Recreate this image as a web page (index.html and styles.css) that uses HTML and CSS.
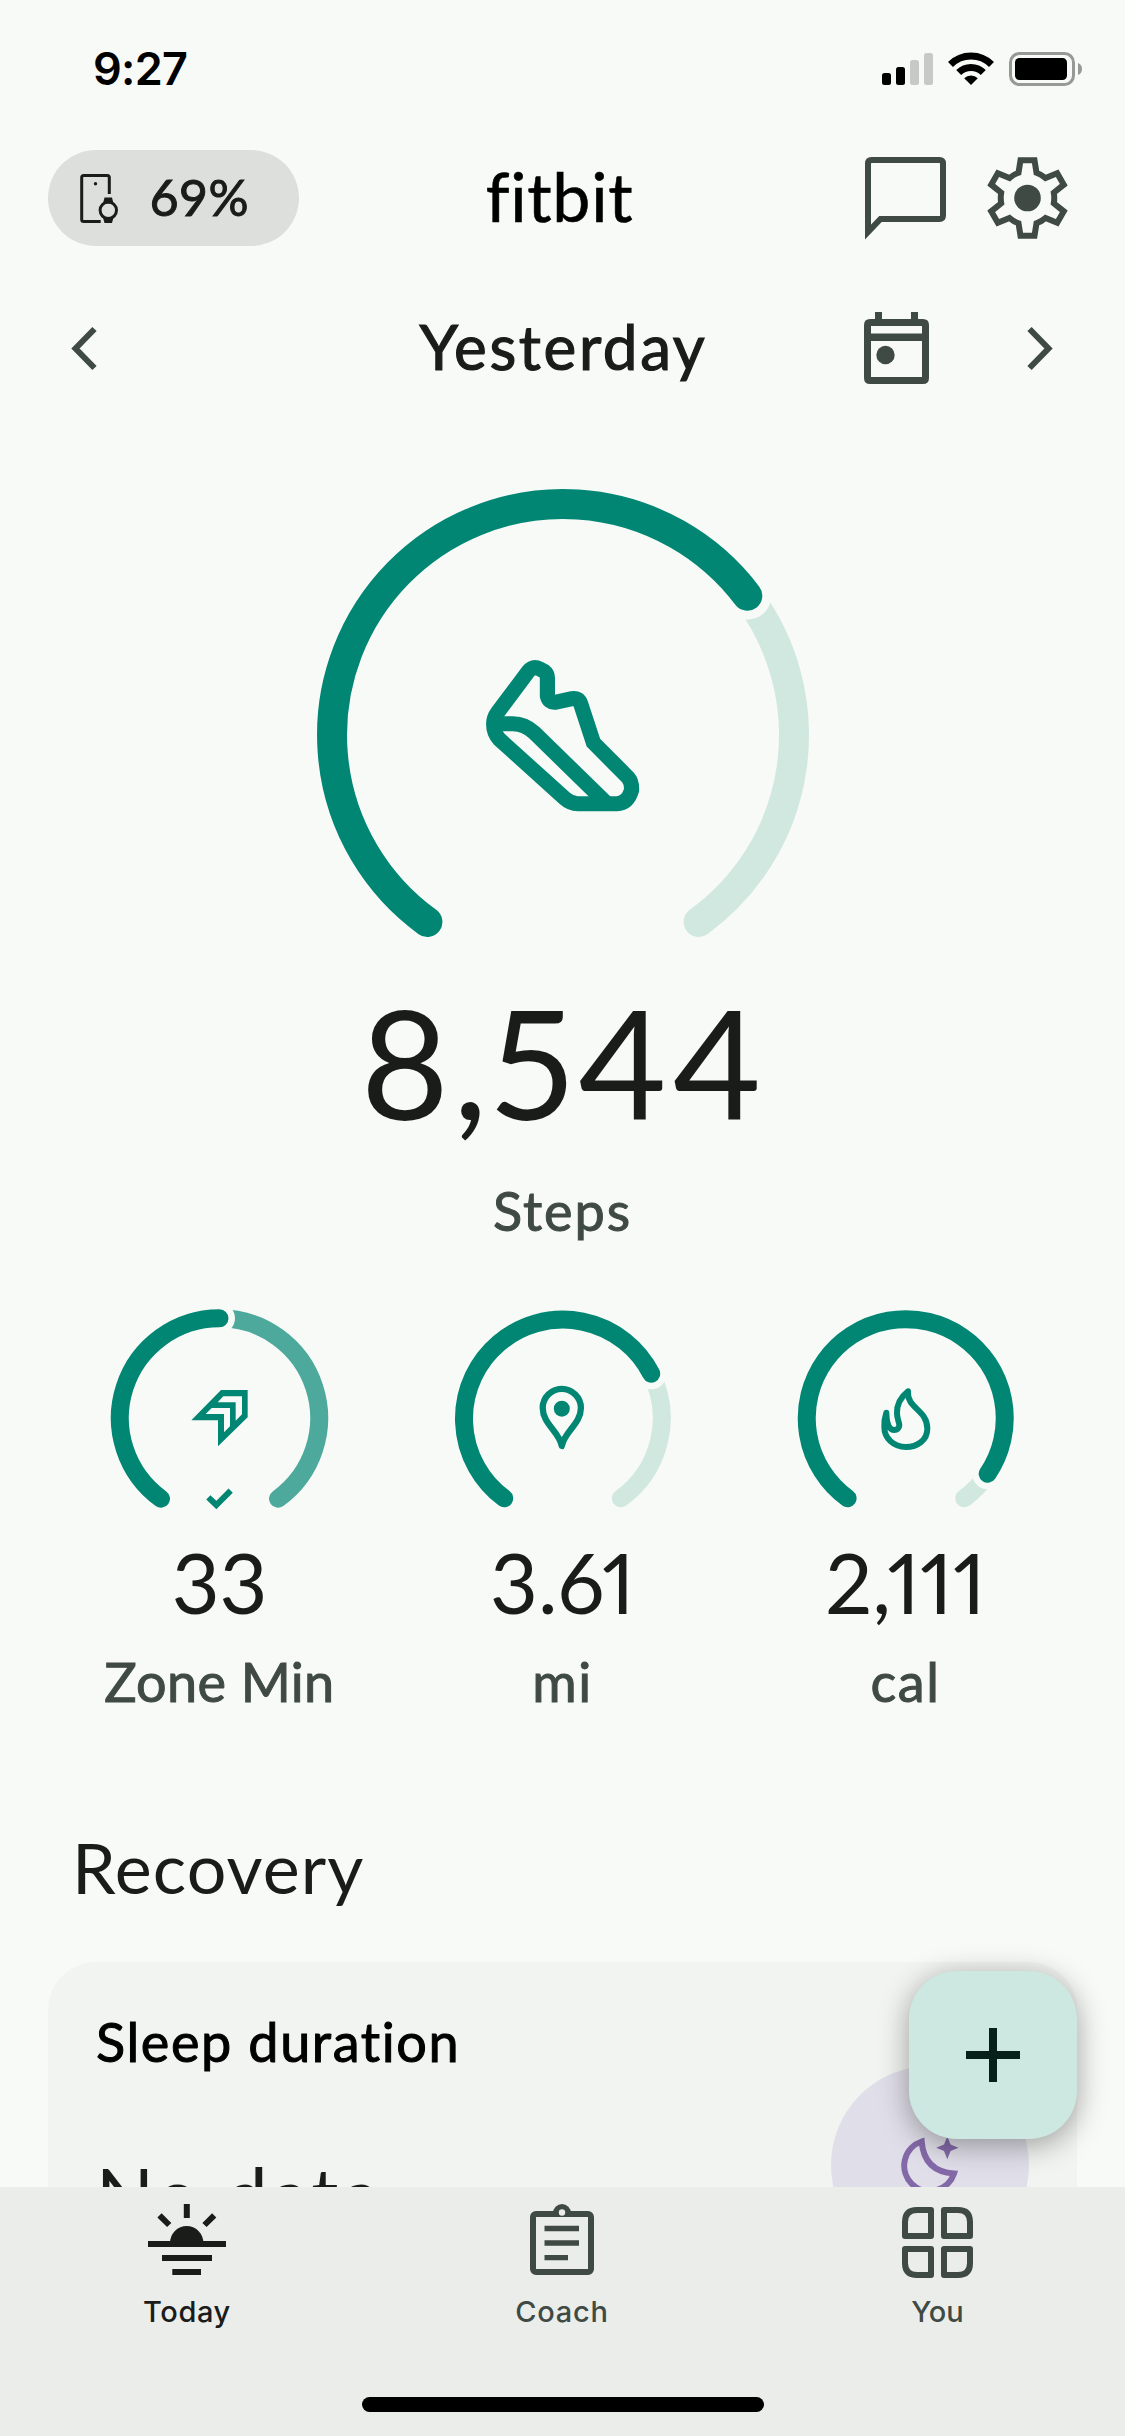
FILE: index.html
```html
<!DOCTYPE html>
<html lang="en">
<head>
<meta charset="utf-8">
<title>Fitbit – Today</title>
<link rel="stylesheet" href="styles.css">
</head>
<body>
<div class="screen">
  <header class="status">
    <span class="time">9:27</span>
    <svg class="status-icons" viewBox="882 50 202 38" width="202" height="38">
      <rect x="882" y="73" width="9" height="12" rx="2.5"/>
      <rect x="896" y="67" width="9" height="18" rx="2.5"/>
      <g fill="#c7c9c6"><rect x="910" y="60" width="9" height="25" rx="2.5"/><rect x="924" y="53" width="9" height="32" rx="2.5"/></g>
      <g fill="none" stroke="#000" stroke-width="7"><path d="M950.5 64.5a29 29 0 0 1 41 0"/><path d="M958.700 72.500a17.400 17.400 0 0 1 24.600 0"/></g>
      <path d="M971 85l-6.800-6.800a9.600 9.600 0 0 1 13.600 0z"/>
      <rect x="1010.500" y="53.500" width="63" height="31" rx="9" fill="none" stroke="#979996" stroke-width="3"/>
      <rect x="1015" y="58" width="52" height="22" rx="4.500"/>
      <path d="M1078 63q4 1.500 4 6t-4 6z" fill="#979996"/>
    </svg>
  </header>

  <div class="topbar">
    <div class="device">
      <svg viewBox="79 173 40 51" width="40" height="51" fill="none" stroke="#1a1c1a" stroke-width="3">
        <path d="M109.300 194v-16.500q0-2-2-2h-23.600q-2 0-2 2v42q0 2 2 2h17"/>
        <circle cx="95.500" cy="183.700" r="1.700" fill="#1a1c1a" stroke="none"/>
        <circle cx="108.300" cy="210.300" r="8.200"/>
        <path d="M104.500 197.500h7.500l1.500 6h-10.500zM104.500 223h7.500l1.500-5.500h-10.500z" fill="#1a1c1a" stroke="none"/>
      </svg>
      <span class="battery">69%</span>
    </div>
    <span class="logo">fitbit</span>
    <div class="actions">
      <svg viewBox="865 157 81 83" width="81" height="83" fill="none" stroke="#404a45" stroke-width="6">
        <path d="M868 232v-68.500q0-3.500 3.500-3.500h68q3.500 0 3.500 3.500v52q0 3.500-3.500 3.500h-59z" stroke-miterlimit="8"/>
      </svg>
      <svg viewBox="-40.500 -41 81 82" width="81" height="82" fill="none" stroke="#404a45" stroke-width="6">
        <path d="M-7-37.700H7L9-25.300Q14-23.500 18-20L29.700-24.700 36.300-13.300 26.300-5.300Q27.200 0 26.300 5.300L36.300 13.300 29.700 24.700 18 20Q14 23.500 9 25.300L7 37.700H-7L-9 25.300Q-14 23.500-18 20L-29.700 24.700-36.300 13.300-26.300 5.300Q-27.200 0-26.300-5.300L-36.300-13.300-29.700-24.700-18-20Q-14-23.500-9-25.300Z"/>
        <circle r="13.300" fill="#404a45" stroke="none"/>
      </svg>
    </div>
  </div>

  <div class="datebar">
    <svg class="prev" viewBox="71 326 26 45" width="26" height="45" fill="none" stroke="#404a45" stroke-width="6"><path d="M94.500 329l-19 19.500 19 19.500"/></svg>
    <span class="date">Yesterday</span>
    <svg class="cal" viewBox="864 312 65 72" width="65" height="72" fill="#404a45">
      <path fill-rule="evenodd" d="M870 319h5v-7h7v7h29v-7h7v7h5q6 0 6 6v53q0 6-6 6h-53q-6 0-6-6v-53q0-6 6-6zM871 326v7.500h51v-7.500zM871 341v36h51v-36z"/>
      <circle cx="885.500" cy="355" r="9.200"/>
    </svg>
    <svg class="next" viewBox="1027 326 26 45" width="26" height="45" fill="none" stroke="#404a45" stroke-width="6"><path d="M1029.500 329l19 19.500-19 19.500"/></svg>
  </div>

  <section class="hero">
    <svg class="ring" viewBox="316 488 494 452" width="494" height="452" fill="none" stroke-linecap="round" stroke-width="30">
      <path d="M747.300 595.700A231 231 0 0 1 698.600 922" stroke="#d1e8e1"/>
      <circle cx="747.300" cy="595.700" r="24" fill="#f8faf7"/>
      <path d="M427.400 922A231 231 0 1 1 747.300 595.700" stroke="#018673"/>
      <g transform="translate(300 460) scale(.338 .3333)" stroke="#018673" stroke-width="45" stroke-linejoin="miter" stroke-linecap="butt">
        <path d="M585 757L675 635Q690 617 709 627L724 635Q732 641 732 655V708Q737 729 755 727L805 716Q824 712 831 733L868 848L970 952Q982 965 981 990Q970 1030 938 1031H822Q800 1031 783 1015L590 838Q573 820 573 793Q573 773 585 757Z"/>
        <path d="M575 791H630Q665 791 693 818L905 1028"/>
      </g>
    </svg>
    <div class="hero-value">8,544</div>
    <div class="label steps">Steps</div>
  </section>

  <section class="metrics">
    <div class="metric">
      <svg viewBox="110 1308 219 203" width="219" height="203" fill="none" stroke-linecap="round" stroke-width="18">
        <path d="M219.500 1318.300A99.700 99.700 0 0 1 278 1498.700" stroke="#4ca99b"/>
        <circle cx="219.500" cy="1318.300" r="15.500" fill="#f8faf7"/>
        <path d="M161 1498.700A99.700 99.700 0 0 1 219.500 1318.300" stroke="#018673"/>
        <g transform="translate(80 1290) scale(.33333)">
          <path fill="#018673" fill-rule="evenodd" d="M334 391L423 300H503V382L414 469V391ZM413 337H467V392L486 373V319H430ZM377 372H432V427L450 409V354H395Z"/>
          <path d="M385 622L409 645L452 602" stroke="#018673" stroke-width="18" stroke-linecap="butt"/>
        </g>
      </svg>
      <div class="value v1">33</div>
      <div class="label l1">Zone Min</div>
    </div>
    <div class="metric">
      <svg viewBox="453.500 1308 219 203" width="219" height="203" fill="none" stroke-linecap="round" stroke-width="18">
        <path d="M651.700 1373.700A99 99 0 0 1 621.300 1498.300" stroke="#d1e8e1"/>
        <circle cx="651.700" cy="1373.700" r="15.500" fill="#f8faf7"/>
        <path d="M504.700 1498.300A99 99 0 1 1 651.700 1373.700" stroke="#018673"/>
        <path d="M562.300 1446C560 1432 543.200 1424 543.200 1408A19.100 19.100 0 0 1 581.400 1408C581.400 1424 564.600 1432 562.300 1446Z" stroke="#018673" stroke-width="6.300" stroke-linejoin="round"/>
        <circle cx="562.300" cy="1408.700" r="8" fill="#018673"/>
      </svg>
      <div class="value v2">3.61</div>
      <div class="label l2">mi</div>
    </div>
    <div class="metric">
      <svg viewBox="796 1308 219 203" width="219" height="203" fill="none" stroke-linecap="round" stroke-width="18">
        <path d="M987.700 1473.700A99 99 0 0 1 964.300 1498.300" stroke="#d1e8e1"/>
        <circle cx="987.700" cy="1473.700" r="15.500" fill="#f8faf7"/>
        <path d="M847.600 1498.300A99 99 0 1 1 987.700 1473.700" stroke="#018673"/>
        <g transform="translate(560 1290) scale(.33333)" stroke="#018673" stroke-linejoin="round">
          <path d="M1044 304C1020 323 1010 345 1011 370C1011 388 1018 396 1018 406C1018 414 1011 420 1003 420C988 420 980 405 979 368C975 380 972 396 973 412C973 444 1000 471 1038 471C1072 471 1102 450 1102 416C1102 358 1040 356 1044 304Z"/>
        </g>
      </svg>
      <div class="value v3">2,111</div>
      <div class="label l3">cal</div>
    </div>
  </section>

  <h2 class="section-title">Recovery</h2>

  <section class="card">
    <div class="card-text">
      <div class="card-title">Sleep duration</div>
      <div class="card-value">No data</div>
    </div>
    <div class="sleep-badge">
      <svg viewBox="0 0 60 60" width="60" height="60" fill="none" stroke="#8469a8" stroke-width="6">
        <path d="M21.700 6.500Q24 36.500 54 38.500A25.500 25.500 0 1 1 21.700 6.500Z"/>
        <path d="M47.300 1.500L50.600 9.500 58.500 12.800 50.600 16 47.300 24.300 44 16 36.200 12.800 44 9.500Z" fill="#8469a8" stroke="none"/>
      </svg>
    </div>
  </section>

  <div class="fab">
    <svg viewBox="0 0 54 54" width="54" height="54" stroke="#07201a" stroke-width="8"><path d="M27 0V54M0 27H54"/></svg>
  </div>

  <nav class="nav">
    <div class="tab active">
      <svg viewBox="148 2204 78 74" width="78" height="74" fill="none" stroke="#1a1c1a" stroke-width="6">
        <path d="M148 2244H226M162 2258H212M172.300 2272H201M186.800 2204V2218M159.500 2215.300L169.200 2225M214.200 2215.300L204.500 2225"/>
        <path d="M170 2243A16.700 17 0 0 1 203.400 2243Z" fill="#1a1c1a" stroke="none"/>
      </svg>
      <span class="t1">Today</span>
    </div>
    <div class="tab">
      <svg viewBox="530 2204 64 74" width="64" height="74" fill="none" stroke="#404a45" stroke-width="6">
        <rect x="533" y="2214" width="58" height="58" rx="3"/>
        <path d="M544.500 2228.500H579M544.500 2243H579M544.500 2257.700H568" stroke-width="5.300"/>
        <circle cx="562" cy="2213" r="9" fill="#404a45" stroke="none"/>
        <path d="M550 2217H574V2224H550Z" fill="#ebedea" stroke="none"/>
        <circle cx="562" cy="2212.500" r="3.200" fill="#ebedea" stroke="none"/>
      </svg>
      <span class="t2">Coach</span>
    </div>
    <div class="tab">
      <svg viewBox="902 2204 71 74" width="71" height="74" fill="none" stroke="#404a45" stroke-width="6">
        <path d="M905 2236V2222Q905 2210 917 2210H931V2236ZM944 2210H958Q970 2210 970 2222V2236H944ZM905 2249H931V2275H917Q905 2275 905 2263ZM944 2249H970V2263Q970 2275 958 2275H944Z" stroke-linejoin="round"/>
      </svg>
      <span class="t3">You</span>
    </div>
    <div class="home"></div>
  </nav>
</div>
</body>
</html>
```
FILE: styles.css
```css
* { box-sizing: border-box; }
body { margin: 0; background: #f8faf7; }
svg { display: block; flex: none; }
.screen {
  position: relative;
  width: 1125px;
  height: 2436px;
  overflow: hidden;
  background: #f8faf7;
  color: #1a1c1a;
  font-family: Lato, "Open Sans", sans-serif;
  font-variant-ligatures: none;
  font-variant-numeric: proportional-nums;
  display: flex;
  flex-direction: column;
}
.status {
  height: 138px;
  flex: none;
  display: flex;
  justify-content: space-between;
  align-items: center;
  padding: 0 41px 0 93px;
}
.time { font: 600 45px/60px Inter, sans-serif; color: #000; letter-spacing: -.7px; }
.topbar {
  height: 120px;
  flex: none;
  display: grid;
  grid-template-columns: 1fr auto 1fr;
  align-items: center;
  padding: 0 57px 0 48px;
}
.device {
  width: 251px;
  height: 96px;
  border-radius: 48px;
  background: #dddfdc;
  display: flex;
  align-items: center;
  gap: 31px;
  padding-left: 31px;
}
.battery { font-size: 50px; line-height: 60px; letter-spacing: 1.4px; padding-bottom: 2px; -webkit-text-stroke: 1px; }
.logo { font-size: 68px; line-height: 80px; color: #000; letter-spacing: .7px; padding: 0 0 4px 3px; -webkit-text-stroke: .6px; }
.actions { display: flex; justify-content: flex-end; gap: 41px; }
.datebar {
  height: 180px;
  flex: none;
  display: grid;
  grid-template-columns: 1fr auto 1fr 0;
  align-items: center;
  padding: 0 72px 0 71px;
}
.date { font-size: 62px; line-height: 76px; letter-spacing: 2.6px; padding: 0 0 5px 3px; -webkit-text-stroke: 1.2px; }
.cal { margin-left: 157px; }
.next { margin-left: -26px; }
.hero { margin-top: 50px; flex: none; display: flex; flex-direction: column; align-items: center; }
.hero-value { font-size: 152px; line-height: 180px; margin-top: 31px; letter-spacing: 3.5px; margin-right: -1px; }
.label { font-size: 54px; line-height: 64px; color: #404a45; -webkit-text-stroke: 1px; white-space: nowrap; }
.steps { margin-top: 28px; letter-spacing: 1.9px; }
.metrics { display: grid; grid-template-columns: repeat(3, 343px); justify-content: center; margin-top: 65px; flex: none; }
.metric { display: flex; flex-direction: column; align-items: center; }
.value { font-size: 83px; line-height: 100px; margin-top: 21px; }
.metric .label { margin-top: 18px; }
.l1 { letter-spacing: .4px; }
.l2, .l3 { letter-spacing: 1.5px; }
.section-title { margin: 111px 0 0 72px; font-weight: 400; font-size: 70px; line-height: 84px; letter-spacing: 1.1px; flex: none; }
.card {
  margin: 53px 48px 0;
  height: 400px;
  flex: none;
  border-radius: 48px;
  background: #f2f4f1;
  display: flex;
  justify-content: space-between;
  padding: 48px 48px 0;
}
.card-title { font-size: 54px; line-height: 64px; letter-spacing: 1.6px; color: #000; -webkit-text-stroke: 1px; }
.card-value { font-size: 76px; line-height: 90px; margin-top: 75px; letter-spacing: 3.2px; }
.sleep-badge {
  width: 198px;
  height: 198px;
  margin-top: 56px;
  border-radius: 50%;
  background: #e0dee8;
  display: flex;
  align-items: center;
  justify-content: center;
}
.fab {
  position: absolute;
  left: 909px;
  top: 1971px;
  width: 168px;
  height: 168px;
  border-radius: 48px;
  background: #cde8e1;
  box-shadow: 0 6px 30px rgba(0,0,0,.36);
  display: flex;
  align-items: center;
  justify-content: center;
}
.nav {
  position: absolute;
  left: 0;
  right: 0;
  bottom: 0;
  height: 249px;
  background: #ebedea;
  display: grid;
  grid-template-columns: 374px 376px 375px;
  grid-template-rows: 210px 15px;
}
.tab {
  display: flex;
  flex-direction: column;
  align-items: center;
  padding-top: 17px;
  color: #404a45;
  font: 500 29px/36px Inter, sans-serif;
  gap: 16px;
}
.active { color: #1a1c1a; }
.t1 { letter-spacing: .6px; }
.t2 { letter-spacing: .8px; }
.home { grid-column: 1 / -1; justify-self: center; width: 402px; height: 15px; border-radius: 8px; background: #000; }
```
